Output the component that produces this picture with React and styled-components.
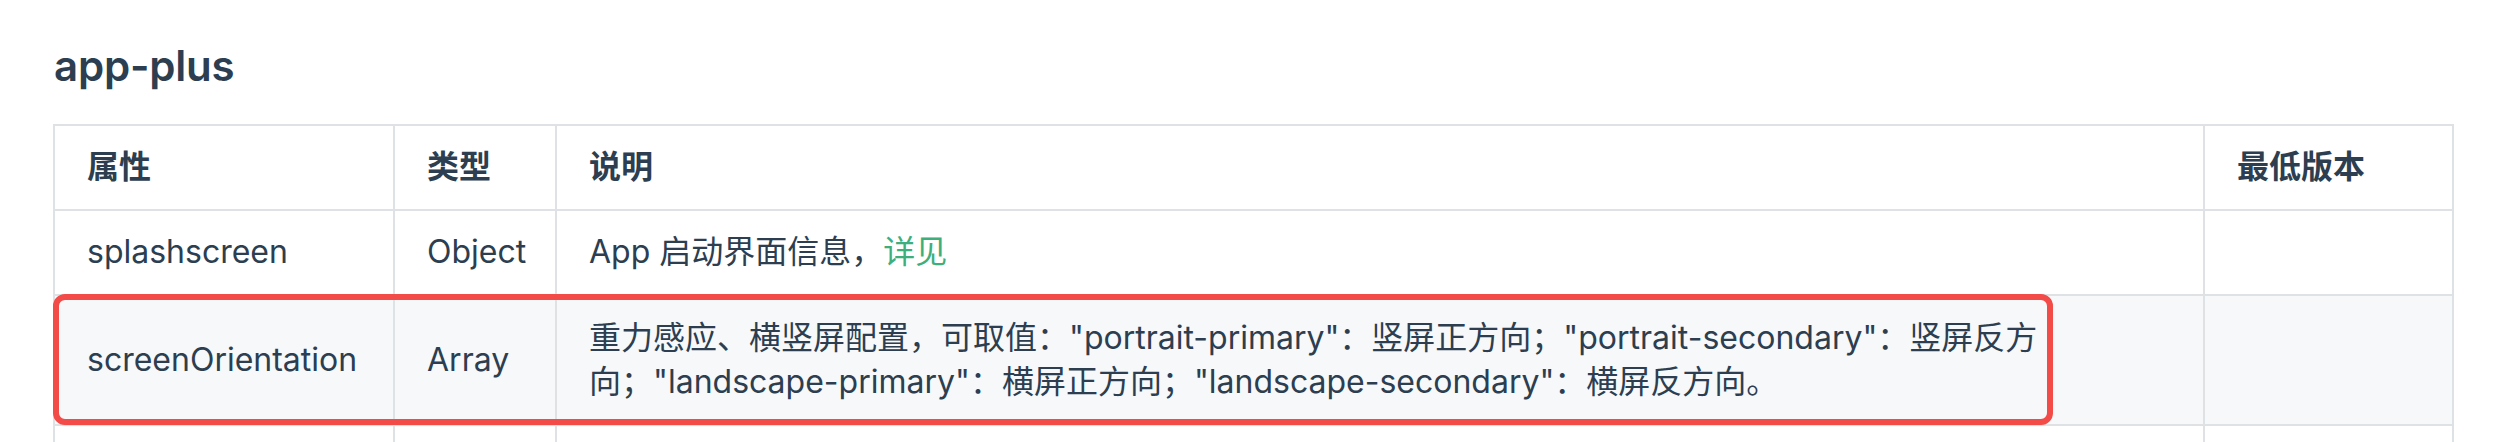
import React from 'react'
import styled, { createGlobalStyle } from 'styled-components'

const GlobalStyle = createGlobalStyle`
  html, body {
    margin: 0;
    padding: 0;
    background: #fff;
  }
  body {
    font-family: Inter, "Noto Sans CJK SC", sans-serif;
    color: #2c3e50;
    -webkit-font-smoothing: antialiased;
  }
`

const Page = styled.div`
  padding: 40px 44px 0 53px;
`

const Heading = styled.h3`
  margin: 0 0 32px 1px;
  font-size: 42px;
  font-weight: 600;
  line-height: 52px;
  letter-spacing: -0.2px;
`

const TableWrap = styled.div`
  position: relative;
  width: 2399px;
`

const Table = styled.table`
  border-collapse: collapse;
  table-layout: fixed;
  width: 100%;
  font-size: 32px;
  line-height: 1.4;
`

const Col = styled.col`
  width: ${p => p.$w}px;
`

const Row = styled.tr`
  background: ${p => (p.$striped ? '#f6f8fa' : '#fff')};
`

const HeadCell = styled.th`
  border: 2px solid #dfe2e5;
  padding: 19.2px 32px;
  text-align: left;
  font-weight: 600;
`

const Cell = styled.td`
  border: 2px solid #dfe2e5;
  padding: 19.2px 32px;
  height: 44.8px;
  vertical-align: middle;
`

const Link = styled.a`
  color: #3eaf7c;
  text-decoration: none;
`

// the annotation drawn over the screenOrientation row
const Highlight = styled.div`
  position: absolute;
  left: 0;
  top: 170px;
  width: 2000px;
  height: 131px;
  box-sizing: border-box;
  border: 6px solid #f34b47;
  border-radius: 12px;
  pointer-events: none;
`

const rows = [
  { key: 'splash', name: 'splashscreen', type: 'Object', desc: <>App 启动界面信息，<Link href="#">详见</Link></> },
  {
    key: 'orientation',
    name: 'screenOrientation',
    type: 'Array',
    desc: '重力感应、横竖屏配置，可取值："portrait-primary"：竖屏正方向；"portrait-secondary"：竖屏反方向；"landscape-primary"：横屏正方向；"landscape-secondary"：横屏反方向。',
  },
  // next row only shows its top edge in the frame
  { key: 'next', name: '', type: '', desc: '' },
]

const App = () => {
  return (
    <Page>
      <GlobalStyle />
      <Heading>app-plus</Heading>
      <TableWrap>
        <Table>
          <colgroup>
            <Col $w={340} />
            <Col $w={162} />
            <Col $w={1648} />
            <Col $w={249} />
          </colgroup>
          <thead>
            <Row>
              <HeadCell>属性</HeadCell>
              <HeadCell>类型</HeadCell>
              <HeadCell>说明</HeadCell>
              <HeadCell>最低版本</HeadCell>
            </Row>
          </thead>
          <tbody>
            {rows.map((r, i) => (
              <Row key={r.key} $striped={i % 2 === 1}>
                <Cell>{r.name}</Cell>
                <Cell>{r.type}</Cell>
                <Cell>{r.desc}</Cell>
                <Cell />
              </Row>
            ))}
          </tbody>
        </Table>
        <Highlight />
      </TableWrap>
    </Page>
  )
}

export default App
